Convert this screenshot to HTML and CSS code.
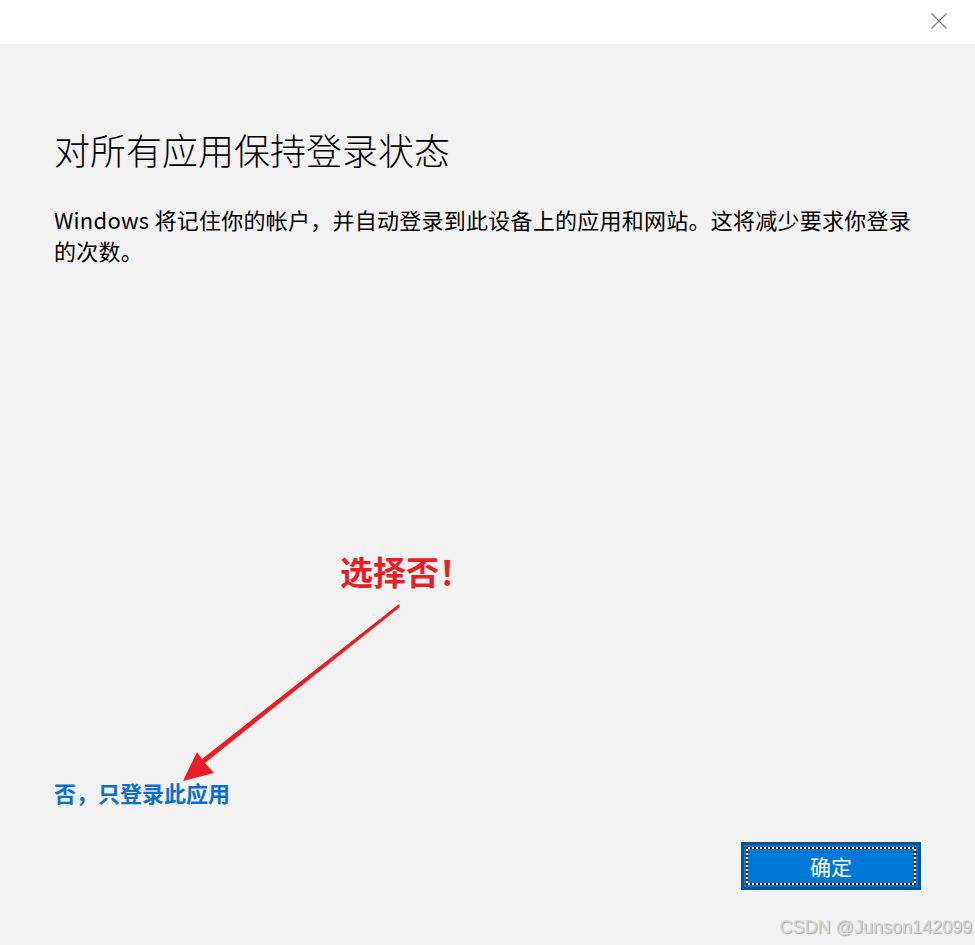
FILE: index.html
```html
<!DOCTYPE html>
<html lang="zh-CN">
<head>
<meta charset="utf-8">
<title>对所有应用保持登录状态</title>
<link rel="stylesheet" href="styles.css">
</head>
<body>
<div class="window">
  <div class="titlebar">
    <button class="close" aria-label="关闭">
      <svg width="16" height="16" viewBox="0 0 16 16"><path d="M0.5 0.5 L15.5 15.5 M15.5 0.5 L0.5 15.5" stroke="#7a7a7a" stroke-width="1.2" fill="none"/></svg>
    </button>
  </div>
  <div class="content">
    <h1 class="title">对所有应用保持登录状态</h1>
    <p class="desc">Windows 将记住你的帐户，并自动登录到此设备上的应用和网站。这将减少要求你登录的次数。</p>
    <a class="link" href="#">否，只登录此应用</a>
    <div class="actions">
      <button class="primary">确定</button>
    </div>
  </div>

  <!-- annotation drawn on top of the screenshot -->
  <div class="note">选择否！</div>
  <svg class="arrow" width="975" height="945" viewBox="0 0 975 945">
    <path d="M399 604 L400 607 L205 763 L214 773 L183 781 L197 752 L202 759 Z" fill="#ea1d25"/>
  </svg>
  <div class="mark">CSDN @Junson142099</div>
</div>
</body>
</html>
```

FILE: styles.css
```css
html, body {
  margin: 0;
  padding: 0;
}

body {
  width: 975px;
  height: 945px;
  overflow: hidden;
  background: #f2f2f2;
  font-family: "Noto Sans CJK SC", "Noto Sans", sans-serif;
  color: #000;
}

.window {
  position: relative;
  height: 945px;
}

.titlebar {
  height: 44px;
  background: #fff;
  display: flex;
  justify-content: flex-end;
  align-items: flex-start;
}

.close {
  border: 0;
  background: transparent;
  padding: 0;
  margin: 13px 28px 0 0;
  width: 16px;
  height: 16px;
  display: block;
}

.close svg {
  display: block;
}

.content {
  padding: 0 54px;
}

.title {
  margin: 81px 0 0;
  font-size: 36px;
  font-weight: 300;
  line-height: 48px;
  letter-spacing: 0;
}

.desc {
  margin: 31px 0 0;
  font-size: 22px;
  font-weight: 400;
  line-height: 31px;
  letter-spacing: 0.25px;
}

.link {
  display: block;
  margin-top: 510px;
  font-size: 22px;
  font-weight: 700;
  line-height: 32px;
  color: #0b6ed0;
  text-decoration: none;
}

.actions {
  display: flex;
  justify-content: flex-end;
  margin-top: 34px;
}

.primary {
  position: relative;
  width: 180px;
  height: 48px;
  border: 3px solid #00559b;
  background: #0078d7;
  color: #fff;
  font-family: "Noto Sans CJK SC", sans-serif;
  font-size: 21px;
  padding: 0;
}

.primary::before,
.primary::after {
  content: "";
  position: absolute;
  left: 2px;
  top: 2px;
  right: 2px;
  bottom: 2px;
}

.primary::before {
  border: 2px solid #fff;
}

.primary::after {
  border: 2px dotted #000;
}

.note {
  position: absolute;
  left: 340px;
  top: 550px;
  font-size: 33px;
  font-weight: 700;
  line-height: 42px;
  color: #ea1d25;
}

.arrow {
  position: absolute;
  left: 0;
  top: 0;
  pointer-events: none;
}

.mark {
  position: absolute;
  right: 3px;
  top: 914px;
  font-family: "Liberation Sans", Arial, sans-serif;
  font-size: 18px;
  line-height: 26px;
  color: #d8d8d8;
  text-shadow: 1px 1px 1px #a8a8a8;
}
```
